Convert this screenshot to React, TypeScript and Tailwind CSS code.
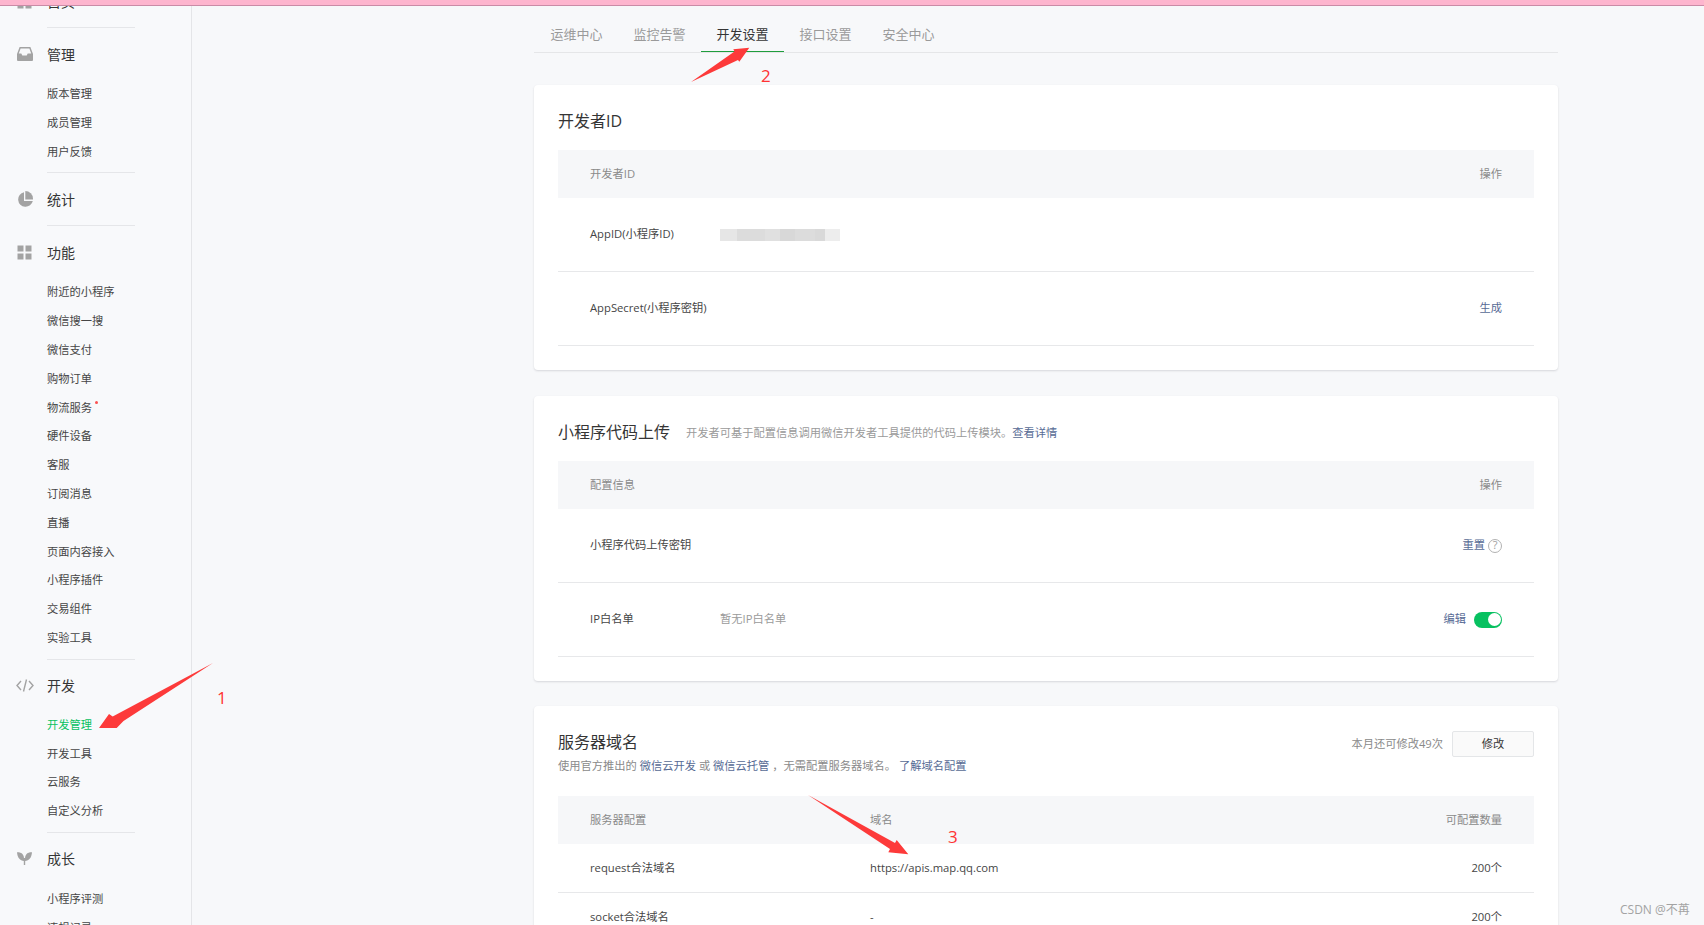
const iconClass = "block shrink-0 fill-[#a3a3a3]"

function HomeIcon() {
  return (
    <svg width="15" height="15" viewBox="0 0 15 15" className={iconClass}>
      <rect x="0.5" y="0.5" width="6" height="6" />
      <rect x="8.5" y="0.5" width="6" height="6" />
      <rect x="0.5" y="8.5" width="6" height="6" />
      <rect x="8.5" y="8.5" width="6" height="6" />
    </svg>
  )
}

function InboxIcon() {
  return (
    <svg width="16" height="14" viewBox="0 0 16 14" className={iconClass}>
      <path d="M2.6 0h10.8L16 7v6a1 1 0 0 1-1 1H1a1 1 0 0 1-1-1V7z" />
      <path
        d="M3.6 1.4h8.8l1.8 5.2h-3.5l-1 1.8H5.300l-1-1.800H1.800z"
        className="fill-[#f8f9fb]"
      />
    </svg>
  )
}

function PieIcon() {
  return (
    <svg width="16" height="16" viewBox="0 0 16 16" className={iconClass}>
      <path d="M7 1.200a7.400 7.400 0 1 0 8.800 8.800H7z" />
      <path d="M8.300 0a7.700 7.700 0 0 1 7.700 7.700v0.800H8.300z" />
    </svg>
  )
}

function CodeIcon() {
  return (
    <svg width="18" height="13" viewBox="0 0 18 13" className="-ml-[1px] mr-[1px] block shrink-0">
      <path
        d="M5 2 L1 6.500 L5 11 M13 2 L17 6.500 L13 11 M10.500 0.500 L7.500 12.500"
        fill="none"
        stroke="#a3a3a3"
        strokeWidth="1.400"
      />
    </svg>
  )
}

function SproutIcon() {
  return (
    <svg width="15" height="13" viewBox="0 0 15 13" className={iconClass}>
      <path d="M0 0.300C3.800 0 7 2 7 6.500V9C3 9 0.300 5.500 0 0.300z" />
      <path d="M15 0.300C11.200 0 8 2 8 6.500V9C12 9 14.700 5.500 15 0.300z" />
      <rect x="6.800" y="6" width="1.400" height="7" />
    </svg>
  )
}

interface NavGroup {
  title: string
  icon: React.ReactNode
  items?: string[]
}

const groups: NavGroup[] = [
  { title: "首页", icon: <HomeIcon /> },
  { title: "管理", icon: <InboxIcon />, items: ["版本管理", "成员管理", "用户反馈"] },
  { title: "统计", icon: <PieIcon /> },
  {
    title: "功能",
    icon: <HomeIcon />,
    items: [
      "附近的小程序",
      "微信搜一搜",
      "微信支付",
      "购物订单",
      "物流服务",
      "硬件设备",
      "客服",
      "订阅消息",
      "直播",
      "页面内容接入",
      "小程序插件",
      "交易组件",
      "实验工具",
    ],
  },
  { title: "开发", icon: <CodeIcon />, items: ["开发管理", "开发工具", "云服务", "自定义分析"] },
  { title: "成长", icon: <SproutIcon />, items: ["小程序评测", "违规记录"] },
]

function Sidebar() {
  return (
    <aside className="-mt-[31px] w-[192px] shrink-0 border-r border-[#e4e5e8] bg-[#f8f9fb]">
      {groups.map((group, index) => (
        <div key={group.title}>
          {index > 0 && <div className="ml-[47px] mr-[56px] h-px bg-[#e5e6e9]" />}
          <div className="flex h-[52px] items-center pl-[17px] text-[14px] text-[#353535]">
            <span className="flex w-[30px] items-center">{group.icon}</span>
            {group.title}
          </div>
          {group.items && (
            <ul className={group.title === "开发" ? "-mt-[1px] pb-[6px]" : "pb-[6px]"}>
              {group.items.map((item) => (
                <li
                  key={item}
                  className={`flex h-[28.8px] items-center pl-[47px] text-[11.25px] ${
                    item === "开发管理" ? "text-[#07c160]" : "text-[#454545]"
                  }`}
                >
                  <span className="relative">
                    {item}
                    {item === "物流服务" && (
                      <span className="absolute -right-[6px] top-[1px] size-[3px] rounded-full bg-[#fa5151]" />
                    )}
                  </span>
                </li>
              ))}
            </ul>
          )}
        </div>
      ))}
    </aside>
  )
}

const tabs = ["运维中心", "监控告警", "开发设置", "接口设置", "安全中心"]

function Tabs() {
  return (
    <div className="flex h-[47px] border-b border-[#e5e6e8] pl-[1px] pt-[12px] text-[13px]">
      {tabs.map((tab) => (
        <div
          key={tab}
          className={`flex h-[34px] w-[83px] items-center justify-center ${
            tab === "开发设置" ? "border-b border-[#1f9d3d] text-[#353535]" : "text-[#9a9a9a]"
          }`}
        >
          {tab}
        </div>
      ))}
    </div>
  )
}

function Card({ className, children }: { className?: string; children: React.ReactNode }) {
  return (
    <section className={`rounded-[4px] bg-white px-[24px] shadow-[0_1px_2px_rgba(140,140,150,0.3)] ${className ?? ""}`}>
      {children}
    </section>
  )
}

function TableHead({ left, right }: { left: string; right: string }) {
  return (
    <div className="flex h-[48px] items-center justify-between bg-[#f6f7f9] pl-[32px] pr-[32px] text-[#8a8a8a]">
      <span>{left}</span>
      <span>{right}</span>
    </div>
  )
}

function Row({ children }: { children: React.ReactNode }) {
  return (
    <div className="flex h-[74px] items-center border-b border-[#e7e8ea] pl-[32px] pr-[32px] text-[#454545]">
      {children}
    </div>
  )
}

function BlurredId() {
  return (
    <span className="flex h-[12px] items-stretch">
      <span className="w-[17px] bg-[#e6e6e6]" />
      <span className="w-[28px] bg-[#dcdcdc]" />
      <span className="w-[15px] bg-[#e0e0e0]" />
      <span className="w-[15px] bg-[#d8d8d8]" />
      <span className="w-[20px] bg-[#dcdcdc]" />
      <span className="w-[10px] bg-[#d9d9d9]" />
      <span className="w-[15px] bg-[#ededed]" />
    </span>
  )
}

function Help() {
  return (
    <span className="ml-[3px] flex size-[14px] items-center justify-center rounded-full border border-[#b2b2b2] text-[11px] text-[#a0a0a0]">
      ?
    </span>
  )
}

function Toggle() {
  return (
    <span className="ml-[8px] flex h-[16px] w-[28px] items-center justify-end rounded-full bg-[#07c160] pr-[1px]">
      <span className="size-[13px] rounded-full bg-white" />
    </span>
  )
}

const link = "text-[#576b95]"

function DomainRow({ name, value }: { name: string; value: string }) {
  return (
    <div className="flex h-[49px] items-center border-b border-[#e7e8ea] pl-[32px] pr-[32px] text-[#454545]">
      <span className="w-[280px]">{name}</span>
      <span>{value}</span>
      <span className="ml-auto">200个</span>
    </div>
  )
}

function Annotations() {
  return (
    <>
      <svg width="1704" height="925" className="pointer-events-none absolute left-0 top-0 fill-[#fd3a3a]">
        <polygon points="213,663 123.500,721 116.700,728 99,728 109,714 112.700,716.500" />
        <polygon points="691,82 738,60 739.300,61.700 749.300,47.700 733.300,49.300 734.500,51.500" />
        <polygon points="808,795 895,843 896.700,840 908.300,854.300 888.300,852.300 890,849" />
      </svg>
      <span className="absolute left-[217px] top-[687px] text-[17px] leading-[22px] text-[#f33]">1</span>
      <span className="absolute left-[761px] top-[65px] text-[17px] leading-[22px] text-[#f33]">2</span>
      <span className="absolute left-[948px] top-[826px] text-[17px] leading-[22px] text-[#f33]">3</span>
      <span className="absolute left-[1620px] top-[901px] text-[12px] leading-[18px] text-[#a3a3a3]">CSDN @不苒</span>
    </>
  )
}

export default function App() {
  return (
    <div className="relative flex h-[925px] flex-col overflow-hidden bg-[#f7f8fa] text-[11.25px] [font-family:'Open_Sans','Noto_Sans_CJK_SC',sans-serif]">
      <div className="relative z-10 h-[6px] shrink-0 border-b border-[#c98ba6] bg-[#fdb5ce]" />
      <div className="flex min-h-0 flex-1">
        <Sidebar />
        <main className="ml-[342px] w-[1024px] shrink-0">
          <Tabs />

          <Card className="mt-[32px] pb-[24px]">
            <h2 className="pb-[17px] pt-[24px] text-[16px] font-normal leading-[24px] text-[#353535]">开发者ID</h2>
            <TableHead left="开发者ID" right="操作" />
            <Row>
              <span className="w-[130px]">AppID(小程序ID)</span>
              <BlurredId />
            </Row>
            <Row>
              <span>AppSecret(小程序密钥)</span>
              <a className={`ml-auto ${link}`}>生成</a>
            </Row>
          </Card>

          <Card className="mt-[26px] pb-[24px]">
            <div className="flex items-center pb-[17px] pt-[24px] leading-[24px]">
              <h2 className="text-[16px] font-normal text-[#353535]">小程序代码上传</h2>
              <span className="ml-[16px] mt-[2px] leading-[22px] text-[#9a9a9a]">
                开发者可基于配置信息调用微信开发者工具提供的代码上传模块。
                <a className={link}>查看详情</a>
              </span>
            </div>
            <TableHead left="配置信息" right="操作" />
            <Row>
              <span>小程序代码上传密钥</span>
              <a className={`ml-auto ${link}`}>重置</a>
              <Help />
            </Row>
            <Row>
              <span className="w-[130px]">IP白名单</span>
              <span className="text-[#9a9a9a]">暂无IP白名单</span>
              <a className={`ml-auto ${link}`}>编辑</a>
              <Toggle />
            </Row>
          </Card>

          <Card className="mt-[25px]">
            <div className="flex justify-between pb-[21px] pt-[24px]">
              <div>
                <h2 className="text-[16px] font-normal leading-[24px] text-[#353535]">服务器域名</h2>
                <p className="mt-[3px] leading-[18px] text-[#8a8a8a]">
                  使用官方推出的 <a className={link}>微信云开发</a> 或 <a className={link}>微信云托管</a> ，无需配置服务器域名。{" "}
                  <a className={link}>了解域名配置</a>
                </p>
              </div>
              <div className="mt-[1px] flex h-[26px] items-center">
                <span className="mr-[9px] text-[#8a8a8a]">本月还可修改49次</span>
                <button className="h-[26px] w-[82px] rounded-[2px] border border-[#e4e6e8] bg-[#fafafa] text-[#353535]">
                  修改
                </button>
              </div>
            </div>
            <div className="flex h-[48px] items-center bg-[#f6f7f9] pl-[32px] pr-[32px] text-[#8a8a8a]">
              <span className="w-[280px]">服务器配置</span>
              <span>域名</span>
              <span className="ml-auto">可配置数量</span>
            </div>
            <DomainRow name="request合法域名" value="https://apis.map.qq.com" />
            <DomainRow name="socket合法域名" value="-" />
          </Card>
        </main>
      </div>
      <Annotations />
    </div>
  )
}
